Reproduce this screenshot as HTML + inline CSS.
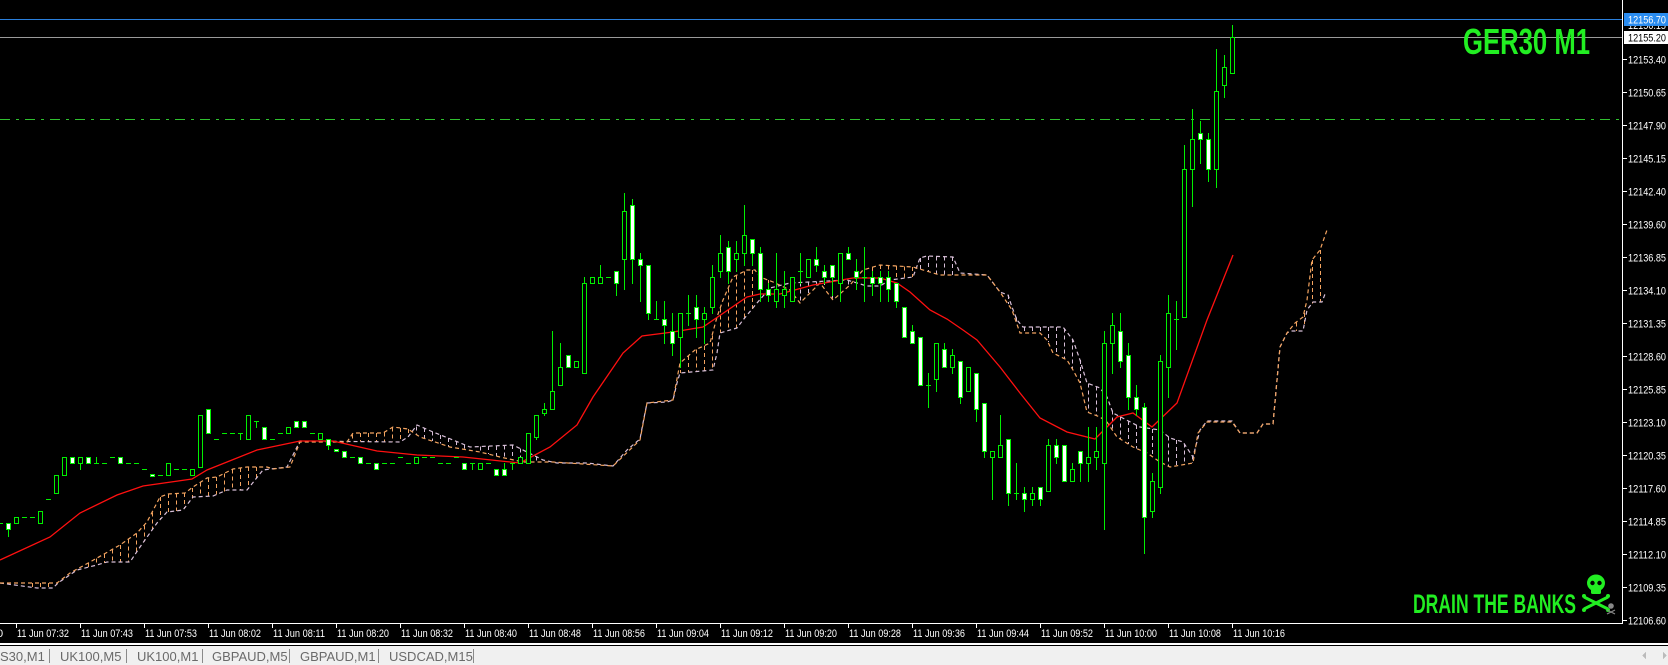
<!DOCTYPE html>
<html><head><meta charset="utf-8">
<style>
html,body{margin:0;padding:0;background:#000;width:1668px;height:665px;overflow:hidden}
svg{display:block}
.tab{font-family:"Liberation Sans",sans-serif;font-size:13px;fill:#6a6a6a}
.ax{font-family:"Liberation Sans",sans-serif;font-size:11px;fill:#fff}
</style></head><body>
<svg id="s" width="1668" height="665" viewBox="0 0 1668 665" xmlns="http://www.w3.org/2000/svg" shape-rendering="crispEdges">
<rect x="0" y="0" width="1668" height="665" fill="#000"/>
<g id="cloud"></g>
<g id="ma"></g>
<line x1="0" y1="19.5" x2="1622" y2="19.5" stroke="#2a7fdc" stroke-width="1"/>
<line x1="0" y1="37.5" x2="1622" y2="37.5" stroke="#9a9a9a" stroke-width="1"/>
<line x1="0" y1="119.5" x2="1622" y2="119.5" stroke="#2fc02f" stroke-width="1" stroke-dasharray="10,6,3,6"/>
<g id="candles"></g>
<line x1="1622.5" y1="0" x2="1622.5" y2="624" stroke="#fff"/>
<line x1="0" y1="623.5" x2="1623" y2="623.5" stroke="#fff"/>
<g id="pticks" stroke="#fff"></g>
<g id="tticks" stroke="#fff"></g>
<g class="ax">
<text x="1628" y="29" textLength="38" lengthAdjust="spacingAndGlyphs">12156.15</text>
<rect x="1624" y="13" width="44" height="13" fill="#2a8cf0"/>
<text x="1628" y="23.5" textLength="38" lengthAdjust="spacingAndGlyphs">12156.70</text>
<rect x="1624" y="31" width="44" height="13" fill="#fff"/>
<text x="1628" y="41.5" textLength="38" lengthAdjust="spacingAndGlyphs" style="fill:#000">12155.20</text>
<text x="1628" y="63.5" textLength="38" lengthAdjust="spacingAndGlyphs">12153.40</text>
<text x="1628" y="96.5" textLength="38" lengthAdjust="spacingAndGlyphs">12150.65</text>
<text x="1628" y="129.5" textLength="38" lengthAdjust="spacingAndGlyphs">12147.90</text>
<text x="1628" y="162.5" textLength="38" lengthAdjust="spacingAndGlyphs">12145.15</text>
<text x="1628" y="195.5" textLength="38" lengthAdjust="spacingAndGlyphs">12142.40</text>
<text x="1628" y="228.5" textLength="38" lengthAdjust="spacingAndGlyphs">12139.60</text>
<text x="1628" y="261.5" textLength="38" lengthAdjust="spacingAndGlyphs">12136.85</text>
<text x="1628" y="294.5" textLength="38" lengthAdjust="spacingAndGlyphs">12134.10</text>
<text x="1628" y="327.5" textLength="38" lengthAdjust="spacingAndGlyphs">12131.35</text>
<text x="1628" y="360.5" textLength="38" lengthAdjust="spacingAndGlyphs">12128.60</text>
<text x="1628" y="393.5" textLength="38" lengthAdjust="spacingAndGlyphs">12125.85</text>
<text x="1628" y="426.5" textLength="38" lengthAdjust="spacingAndGlyphs">12123.10</text>
<text x="1628" y="459.5" textLength="38" lengthAdjust="spacingAndGlyphs">12120.35</text>
<text x="1628" y="492.5" textLength="38" lengthAdjust="spacingAndGlyphs">12117.60</text>
<text x="1628" y="525.5" textLength="38" lengthAdjust="spacingAndGlyphs">12114.85</text>
<text x="1628" y="558.5" textLength="38" lengthAdjust="spacingAndGlyphs">12112.10</text>
<text x="1628" y="591.5" textLength="38" lengthAdjust="spacingAndGlyphs">12109.35</text>
<text x="1628" y="624.5" textLength="38" lengthAdjust="spacingAndGlyphs">12106.60</text>
</g>
<g class="ax">
<text x="-3" y="637">0</text>
<text x="17" y="637" textLength="52" lengthAdjust="spacingAndGlyphs">11 Jun 07:32</text>
<text x="81" y="637" textLength="52" lengthAdjust="spacingAndGlyphs">11 Jun 07:43</text>
<text x="145" y="637" textLength="52" lengthAdjust="spacingAndGlyphs">11 Jun 07:53</text>
<text x="209" y="637" textLength="52" lengthAdjust="spacingAndGlyphs">11 Jun 08:02</text>
<text x="273" y="637" textLength="52" lengthAdjust="spacingAndGlyphs">11 Jun 08:11</text>
<text x="337" y="637" textLength="52" lengthAdjust="spacingAndGlyphs">11 Jun 08:20</text>
<text x="401" y="637" textLength="52" lengthAdjust="spacingAndGlyphs">11 Jun 08:32</text>
<text x="465" y="637" textLength="52" lengthAdjust="spacingAndGlyphs">11 Jun 08:40</text>
<text x="529" y="637" textLength="52" lengthAdjust="spacingAndGlyphs">11 Jun 08:48</text>
<text x="593" y="637" textLength="52" lengthAdjust="spacingAndGlyphs">11 Jun 08:56</text>
<text x="657" y="637" textLength="52" lengthAdjust="spacingAndGlyphs">11 Jun 09:04</text>
<text x="721" y="637" textLength="52" lengthAdjust="spacingAndGlyphs">11 Jun 09:12</text>
<text x="785" y="637" textLength="52" lengthAdjust="spacingAndGlyphs">11 Jun 09:20</text>
<text x="849" y="637" textLength="52" lengthAdjust="spacingAndGlyphs">11 Jun 09:28</text>
<text x="913" y="637" textLength="52" lengthAdjust="spacingAndGlyphs">11 Jun 09:36</text>
<text x="977" y="637" textLength="52" lengthAdjust="spacingAndGlyphs">11 Jun 09:44</text>
<text x="1041" y="637" textLength="52" lengthAdjust="spacingAndGlyphs">11 Jun 09:52</text>
<text x="1105" y="637" textLength="52" lengthAdjust="spacingAndGlyphs">11 Jun 10:00</text>
<text x="1169" y="637" textLength="52" lengthAdjust="spacingAndGlyphs">11 Jun 10:08</text>
<text x="1233" y="637" textLength="52" lengthAdjust="spacingAndGlyphs">11 Jun 10:16</text>
</g>
<text x="1463" y="54" textLength="127" lengthAdjust="spacingAndGlyphs" style="font-family:'Liberation Sans Narrow','Liberation Sans',sans-serif;font-weight:bold;font-size:36px;fill:#22ee22">GER30 M1</text>
<text x="1413" y="613" textLength="163" lengthAdjust="spacingAndGlyphs" style="font-family:'Liberation Sans Narrow','Liberation Sans',sans-serif;font-weight:bold;font-size:27px;fill:#22ee22">DRAIN THE BANKS</text>
<g shape-rendering="auto" fill="#22ee22">
<ellipse cx="1596" cy="583" rx="9" ry="8.5"/>
<rect x="1591" y="588" width="10" height="6" rx="1.5"/>
<circle cx="1592.5" cy="583" r="2.2" fill="#000"/>
<circle cx="1599.5" cy="583" r="2.2" fill="#000"/>
<path d="M1584 597 L1608 609 M1608 597 L1584 609" stroke="#22ee22" stroke-width="3"/>
<circle cx="1584" cy="596" r="2"/><circle cx="1608" cy="596" r="2"/>
<circle cx="1584" cy="610" r="2"/><circle cx="1608" cy="610" r="2"/>
</g>
<g shape-rendering="auto" fill="#888">
<circle cx="1611" cy="606" r="2.8"/>
<path d="M1607 610 L1615 614 M1615 610 L1607 614" stroke="#888" stroke-width="1.2"/>
</g>
<rect x="0" y="643" width="1668" height="2" fill="#fff"/>
<rect x="0" y="646" width="1668" height="19" fill="#f0f0f0"/>
<g class="tab">
<text x="0" y="661">S30,M1</text>
<text x="60" y="661">UK100,M5</text>
<text x="137" y="661">UK100,M1</text>
<text x="212" y="661">GBPAUD,M5</text>
<text x="300" y="661">GBPAUD,M1</text>
<text x="389" y="661">USDCAD,M15</text>
</g>
<g stroke="#8a8a8a">
<line x1="49.5" y1="649" x2="49.5" y2="663"/>
<line x1="126.5" y1="649" x2="126.5" y2="663"/>
<line x1="202.5" y1="649" x2="202.5" y2="663"/>
<line x1="289.5" y1="649" x2="289.5" y2="663"/>
<line x1="378.5" y1="649" x2="378.5" y2="663"/>
<line x1="473.5" y1="649" x2="473.5" y2="663"/>
</g>
<path d="M1646 652 L1642 655.5 L1646 659 Z" fill="#bbb"/>
<path d="M1663 652 L1667 655.5 L1663 659 Z" fill="#bbb"/>
</svg>
<script>
(function(){
var NS="http://www.w3.org/2000/svg";
function el(p,t,a){var e=document.createElementNS(NS,t);for(var k in a)e.setAttribute(k,a[k]);p.appendChild(e);return e;}
var pt=document.getElementById('pticks');
for(var k=0;k<18;k++){var y=Math.round(59.3+32.98*k)+0.5;el(pt,'line',{x1:1622,y1:y,x2:1627,y2:y});}
var tt=document.getElementById('tticks');
for(var k=0;k<20;k++){var x=16+64*k+0.5;el(tt,'line',{x1:x,y1:623,x2:x,y2:628});}
var A=[[0,583],[57,583],[70,573],[90,562],[120,545],[137,533],[147,522],[160,497],[168,494],[185,493],[193,487],[207,478],[217,477],[233,469],[247,467],[267,467],[273,469],[290,467],[300,442],[347,442],[353,433],[383,433],[393,427],[408,429],[420,437],[450,447],[480,452],[500,457],[523,462],[553,462],[613,466],[640,440],[647,403],[673,400],[680,363],[695,350],[710,343],[717,317],[723,300],[733,277],[747,270],[755,270],[760,277],[773,282],[790,290],[800,303],[820,283],[833,300],[850,285],[863,270],[880,265],[913,267],[940,275],[987,275],[1000,292],[1012,310],[1020,333],[1040,333],[1047,340],[1053,353],[1067,360],[1073,370],[1080,383],[1087,412],[1100,417],[1107,422],[1117,437],[1133,447],[1147,453],[1160,462],[1170,467],[1193,463],[1198,433],[1207,422],[1232,422],[1240,433],[1257,433],[1263,424],[1273,424],[1277,380],[1280,347],[1287,333],[1295,323],[1303,317],[1307,300],[1312,260],[1320,250],[1327,230]];
var B=[[0,583],[37,588],[53,588],[58,583],[77,570],[97,565],[107,562],[130,562],[140,547],[157,523],[167,512],[183,510],[193,497],[213,496],[227,490],[247,490],[263,470],[287,467],[297,447],[300,441],[400,442],[408,437],[417,425],[433,432],[453,440],[470,447],[513,445],[543,460],[557,463],[587,463],[613,466],[627,450],[640,439],[643,423],[647,403],[667,402],[673,400],[677,383],[680,373],[713,370],[717,353],[720,333],[737,328],[743,320],[757,303],[770,288],[790,283],[847,280],[867,286],[880,286],[890,280],[913,277],[920,258],[927,256],[953,257],[960,273],[987,275],[1000,292],[1008,295],[1012,307],[1017,320],[1023,327],[1063,327],[1073,340],[1080,360],[1087,383],[1100,388],[1107,397],[1113,413],[1140,427],[1160,430],[1170,438],[1183,442],[1193,457],[1200,430],[1207,421],[1232,421],[1240,433],[1257,433],[1263,424],[1273,424],[1277,380],[1280,347],[1287,333],[1290,331],[1303,331],[1307,310],[1313,302],[1322,302],[1325,294]];
function interp(P,x){if(x<=P[0][0])return P[0][1];for(var i=1;i<P.length;i++){if(x<=P[i][0]){var a=P[i-1],b=P[i];return a[1]+(b[1]-a[1])*(x-a[0])/((b[0]-a[0])||1);}}return null;}
var cg=document.getElementById('cloud');
var OR="#f4a460",TH="#d8bfd8";
for(var x=8;x<=1326;x+=8){var ya=interp(A,x),yb=interp(B,x);if(ya==null||yb==null)continue;if(Math.abs(ya-yb)>4){var c=ya<yb?OR:TH;el(cg,'line',{x1:x+0.5,y1:Math.min(ya,yb),x2:x+0.5,y2:Math.max(ya,yb),stroke:c,'stroke-dasharray':'4,3'});}}
function pl(P,c){el(cg,'polyline',{points:P.map(function(p){return p.join(',')}).join(' '),fill:'none',stroke:c,'stroke-dasharray':'4,3','shape-rendering':'auto','stroke-width':1.2});}
pl(B,TH);pl(A,OR);
var M=[[0,560],[50,537],[80,513],[117,495],[143,486],[192,479],[207,470],[257,450],[300,441],[333,441],[377,451],[417,455],[463,457],[520,463],[550,447],[577,425],[593,397],[623,353],[642,336],[673,332],[703,327],[747,297],[760,294],[780,294],[813,285],[847,279],[853,278],[880,278],[897,283],[910,292],[930,310],[947,319],[963,330],[977,340],[1000,367],[1020,393],[1040,418],[1067,432],[1095,439],[1117,417],[1133,413],[1152,427],[1177,403],[1207,320],[1233,255]];
el(document.getElementById('ma'),'polyline',{points:M.map(function(p){return p.join(',')}).join(' '),fill:'none',stroke:'#ff1010','stroke-width':1.3,'shape-rendering':'auto'});
var D="-1 d 523;0 w 523 529 523 536;1 h 517 523;2 d 517;3 d 517;4 h 511 523;5 d 499;6 h 475 493;7 h 457 475;8 w 457 463;9 h 457 463 457 469;10 w 457 463;11 d 463 463 457 463;12 d 463;13 d 457;14 w 457 463;15 d 463;16 d 463;17 d 469;18 w 474 476;19 d 475;20 h 463 475;21 d 469;22 d 469;23 h 469 475;24 h 415 467;25 w 409 433;26 d 439;27 d 433;28 d 433;29 d 433 433 433 439;30 h 415 439;31 d 421 421 421 427;32 w 427 439;33 d 439;34 d 433;35 h 427 433;36 w 421 427;37 w 421 427;38 d 433;39 h 433 439;40 w 439 445 439 449;41 w 449 451;42 w 451 457;43 d 457;44 w 457 463;45 d 463;46 w 463 469;47 d 463;48 d 463;49 d 457;50 d 463;51 h 457 463;52 d 457;53 d 457;54 d 463;55 d 463;56 d 457;57 w 463 469;58 d 463 463 463 469;59 h 463 469;60 d 463;61 w 469 475;62 w 469 475 463 475;63 d 463 463 463 469;64 h 457 463;65 h 433 463;66 h 415 437 415 439;67 h 409 413 403 415;68 h 391 409 331 409;69 h 367 385 343 385;70 w 355 367;71 h 361 367;72 h 283 373 277 373;73 h 277 283;74 h 277 283 265 283;75 d 277;76 w 271 283 271 295;77 h 211 259 193 289;78 w 205 259 199 283;79 w 259 265 253 301;80 w 265 313 265 319;81 d 319 319 301 319;82 w 319 325 301 343;83 w 331 343 313 355;84 h 313 337 313 367;85 d 313 313 295 325;86 w 307 319 295 337;87 h 313 319 307 343;88 h 277 307 265 313;89 h 253 271 235 277;90 w 247 271 241 283;91 h 253 259 241 271;92 h 235 253 205 265;93 w 239 253 239 265;94 w 253 289 247 301;95 w 289 295 283 301;96 h 289 301 253 307;97 h 289 295 271 307;98 h 277 301;99 d 271 271 253 283;100 h 259 277;101 w 259 265 247 271;102 w 271 277 265 283;103 w 265 277 265 295;104 h 253 283 253 301;105 w 253 259 247 259;106 w 271 277 259 289;107 d 277 277 247 301;108 w 277 283 271 295;109 w 277 283 271 301;110 w 277 289 271 301;111 w 283 301 283 307;112 w 307 337;113 w 331 343 325 343;114 w 337 385;115 d 385 385 373 407;116 h 343 379 343 391;117 w 349 367 343 367;118 h 355 367 349 373;119 w 361 397 361 403;120 h 367 391;121 w 373 409 373 421;122 w 403 451 403 457;123 h 451 457 451 499;124 h 445 457 415 457;125 w 439 493 439 505;126 d 493 493 463 499;127 w 493 499 487 511;128 h 493 499 487 505;129 w 487 499 487 505;130 h 445 491 439 491;131 w 445 457 439 463;132 w 445 481;133 h 469 481 463 481;134 w 451 463 451 481;135 h 457 463 427 481;136 h 451 457 427 469;137 h 343 463 331 529;138 h 325 343 313 373;139 w 331 361 313 367;140 w 355 397 343 409;141 w 397 409 385 415;142 w 407 517 403 553;143 h 481 511 473 517;144 h 361 487 355 493;145 h 313 367 295 397;146 d 319 319 301 349;147 h 169 317 145 317;148 h 139 169 109 206;149 w 133 139 121 163;150 w 139 169 133 181;151 h 91 169 49 187;152 h 67 85 55 97;153 h 37 73 25 73";
var G="#00f000",cgp=document.getElementById('candles');
D.split(';').forEach(function(r){var p=r.trim().split(/\s+/);var i=+p[0],t=p[1],top=+p[2],bot=p[3]!==undefined?+p[3]:top,hi=p[4]!==undefined?+p[4]:top,lo=p[5]!==undefined?+p[5]:bot;
var cx=8+8*i;
if(lo>hi)el(cgp,'rect',{x:cx,y:hi,width:1,height:lo-hi+1,fill:G});
if(t=='d'){el(cgp,'rect',{x:cx-2,y:top,width:5,height:1,fill:G});}
else{var h=Math.max(bot-top,2);el(cgp,'rect',{x:cx-2,y:top,width:5,height:h+1,fill:G});el(cgp,'rect',{x:cx-1,y:top+1,width:3,height:h-1,fill:t=='w'?'#fff':'#000'});}
});
})();
</script>
</body></html>
